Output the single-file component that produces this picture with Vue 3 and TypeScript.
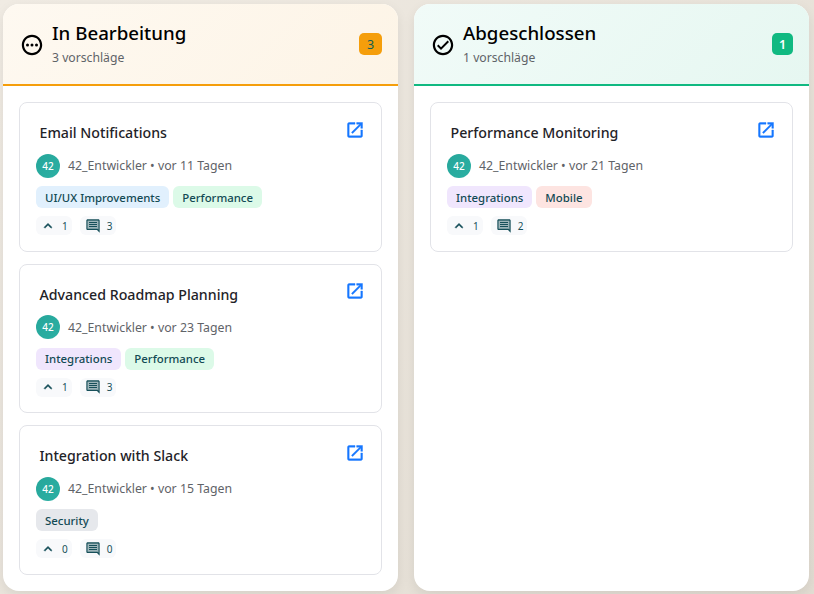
<template>
  <div class="board">
    <section v-for="col in columns" :key="col.title" class="column">
      <header class="column-header" :class="col.kind">
        <svg class="status-icon" width="24" height="24" viewBox="0 0 24 24" fill="currentColor">
          <path d="M12 1.8C6.37 1.8 1.8 6.37 1.8 12S6.37 22.2 12 22.2 22.2 17.63 22.2 12 17.63 1.8 12 1.8zm0 18.2c-4.41 0-8-3.59-8-8s3.59-8 8-8 8 3.59 8 8-3.59 8-8 8z" />
          <template v-if="col.kind === 'progress'">
            <circle cx="7.5" cy="12" r="1.5" />
            <circle cx="12" cy="12" r="1.5" />
            <circle cx="16.5" cy="12" r="1.5" />
          </template>
          <path v-else d="M16.59 7.58 10 14.17l-2.59-2.58L6 13l4 4 8-8z" />
        </svg>
        <div class="heading">
          <h2>{{ col.title }}</h2>
          <span class="sub">{{ col.items.length }} vorschläge</span>
        </div>
        <span class="count">{{ col.items.length }}</span>
      </header>
      <div class="cards">
        <article v-for="item in col.items" :key="item.title" class="card">
          <div class="card-top">
            <h3>{{ item.title }}</h3>
            <svg class="open" width="20" height="20" viewBox="0 0 24 24" fill="currentColor" stroke="currentColor" stroke-width="0.5">
              <path d="M19 19H5V5h7V3H5a2 2 0 0 0-2 2v14a2 2 0 0 0 2 2h14c1.1 0 2-.9 2-2v-7h-2v7zM14 3v2h3.59l-9.83 9.83 1.41 1.41L19 6.41V10h2V3h-7z" />
            </svg>
          </div>
          <div class="meta">
            <span class="avatar">42</span>
            <span>42_Entwickler • vor {{ item.days }} Tagen</span>
          </div>
          <div class="tags">
            <span v-for="tag in item.tags" :key="tag" class="tag" :class="tagClass[tag]">{{ tag }}</span>
          </div>
          <div class="stats">
            <span class="stat vote">
              <svg width="16" height="16" viewBox="0 0 24 24" fill="currentColor" stroke="currentColor" stroke-width="0.6">
                <path d="M12 8l-6 6 1.41 1.41L12 10.83l4.59 4.58L18 14z" />
              </svg>
              {{ item.votes }}
            </span>
            <span class="stat comment">
              <svg width="16" height="16" viewBox="0 0 24 24" fill="currentColor">
                <path opacity="0.4" d="M4 4h16v13H4z" />
                <path d="M20 2H4c-1.1 0-2 .9-2 2v12c0 1.1.9 2 2 2h14l4 4V4c0-1.1-.9-2-2-2zm0 15.17L18.83 16H4V4h16v13.17z" />
                <path d="M6 12h12v1.6H6zM6 9h12v1.6H6zM6 6h12v1.6H6z" />
              </svg>
              {{ item.comments }}
            </span>
          </div>
        </article>
      </div>
    </section>
  </div>
</template>

<script setup lang="ts">
interface Item {
  title: string
  days: number
  tags: string[]
  votes: number
  comments: number
}

const tagClass: Record<string, string> = {
  'UI/UX Improvements': 'blue',
  Performance: 'green',
  Integrations: 'purple',
  Security: 'gray',
  Mobile: 'red',
}

const inProgress: Item[] = [
  { title: 'Email Notifications', days: 11, tags: ['UI/UX Improvements', 'Performance'], votes: 1, comments: 3 },
  { title: 'Advanced Roadmap Planning', days: 23, tags: ['Integrations', 'Performance'], votes: 1, comments: 3 },
  { title: 'Integration with Slack', days: 15, tags: ['Security'], votes: 0, comments: 0 },
]

const done: Item[] = [
  { title: 'Performance Monitoring', days: 21, tags: ['Integrations', 'Mobile'], votes: 1, comments: 2 },
]

const columns = [
  { title: 'In Bearbeitung', kind: 'progress', items: inProgress },
  { title: 'Abgeschlossen', kind: 'done', items: done },
]
</script>

<style scoped>
.board {
  display: grid;
  grid-template-columns: 395px 395px;
  gap: 16px;
  padding: 4px 5px 3px 3px;
  height: 594px;
  box-sizing: border-box;
  background: linear-gradient(135deg, #f0ebe3, #e2dcd2);
  font-family: "Noto Sans", "Open Sans", sans-serif;
}

.column {
  background: #fff;
  border-radius: 16px;
  overflow: hidden;
  box-shadow: 0 4px 12px rgba(0, 0, 0, 0.08);
  display: flex;
  flex-direction: column;
}

.column-header {
  flex-shrink: 0;
  height: 82px;
  box-sizing: border-box;
  padding: 0 16px 0 17px;
  display: flex;
  align-items: center;
  gap: 8px;
  border-bottom: 2px solid;
}

.column-header.progress {
  background: linear-gradient(135deg, #fef9f1, #fdf4e6);
  border-color: #f59e0b;
}

.column-header.done {
  background: linear-gradient(135deg, #f1fbf8, #e6f7f1);
  border-color: #10b981;
}

.status-icon {
  color: #000;
  margin-top: 1px;
}

.heading {
  flex: 1;
  display: flex;
  flex-direction: column;
  gap: 2px;
  margin-bottom: 2px;
}

h2 {
  margin: 0;
  font-size: 18.7px;
  line-height: 28px;
  font-weight: 500;
  color: #000;
}

.sub {
  font-size: 12.2px;
  line-height: 18px;
  color: #5f6368;
}

.count {
  height: 22px;
  border-radius: 5px;
  display: flex;
  align-items: center;
  justify-content: center;
  font-size: 12.5px;
}

.progress .count {
  width: 23px;
  background: #f59e0b;
  color: #0f5f55;
}

.done .count {
  width: 21px;
  background: #10b981;
  color: #fff;
  font-weight: 600;
}

.cards {
  padding: 16px;
  display: flex;
  flex-direction: column;
  gap: 12px;
}

.card {
  border: 1px solid #e2e3e8;
  border-radius: 8px;
  height: 149.67px;
  box-sizing: border-box;
  padding: 16px;
  background: #fff;
}

.card-top {
  display: flex;
  justify-content: space-between;
  align-items: flex-start;
  height: 31.5px;
  padding-left: 3.5px;
}

h3 {
  margin: 0;
  font-size: 14.2px;
  line-height: 28px;
  font-weight: 500;
  color: #1f2328;
}

.open {
  flex-shrink: 0;
  color: #1677ff;
  margin: 0.5px 0 0 0;
}

.meta {
  display: flex;
  align-items: center;
  gap: 8px;
  margin-top: 3px;
  font-size: 12.3px;
  color: #5f6368;
}

.avatar {
  width: 24px;
  height: 24px;
  border-radius: 50%;
  background: linear-gradient(135deg, #26a69a, #2bb0a4);
  color: #fff;
  font-size: 10px;
  font-weight: 500;
  display: flex;
  align-items: center;
  justify-content: center;
}

.tags {
  display: flex;
  gap: 4px;
  margin-top: 8.5px;
}

.tag {
  height: 22px;
  padding: 0 9px;
  border-radius: 6px;
  display: flex;
  align-items: center;
  font-size: 11.4px;
  font-weight: 500;
  color: #124a54;
}

.tag.blue { background: #e1f0fd; }
.tag.green { background: #dcfae8; }
.tag.purple { background: #f0e6fd; }
.tag.gray { background: #e6e8ec; }
.tag.red { background: #fde4e1; }

.stats {
  display: flex;
  gap: 8px;
  margin-top: 8px;
}

.stat {
  height: 19px;
  padding: 0 4px;
  border-radius: 6px;
  background: #f8f9fb;
  display: flex;
  align-items: center;
  gap: 6px;
  font-size: 10px;
  color: #17505a;
}

.stat.comment {
  padding-left: 5px;
}
</style>

<style>
html, body {
  margin: 0;
  overflow: hidden;
}
</style>
